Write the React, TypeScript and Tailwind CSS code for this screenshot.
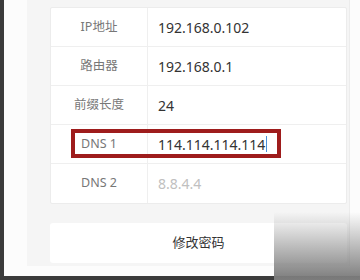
const ROWS = [
  { label: "IP地址", value: "192.168.0.102" },
  { label: "路由器", value: "192.168.0.1" },
  { label: "前缀长度", value: "24" },
  { label: "DNS 1", value: "114.114.114.114", focused: true },
  { label: "DNS 2", value: "8.8.4.4", placeholder: true },
];

export default function App() {
  return (
    <div
      className="relative w-[360px] h-[280px] overflow-hidden bg-[#3b3b3b] pl-[4px] pb-[4px]"
      style={{ fontFamily: '"Noto Sans", "Noto Sans CJK SC", sans-serif' }}
    >
      <div className="h-full w-full bg-[#fcfcfc] pl-[23px]">
        <div className="w-[323px] h-[266px] bg-[#f5f5f5] pl-[23px] pt-[7px] border-r border-[#ececec]">
          {/* settings table */}
          <div className="relative w-[297px] bg-white border border-[#ececec] rounded-[2px]">
            {ROWS.map((r, i) => (
              <div
                key={r.label}
                className={`grid grid-cols-[97px_1fr] h-[39px] ${i < ROWS.length - 1 ? "border-b border-[#efefef]" : ""}`}
              >
                <div className="flex items-center justify-center border-r border-[#efefef] text-[12.5px] text-[#777]">
                  {r.label}
                </div>
                <div
                  className={`flex items-center pl-[10px] text-[14px] ${r.placeholder ? "text-[#c0c0c0]" : "text-[#333]"}`}
                >
                  {r.value}
                  {r.focused && <span className="ml-[1px] w-[1px] h-[16px] bg-[#4a90d9]" />}
                </div>
              </div>
            ))}
            {/* red highlight annotation */}
            <div className="absolute left-[20px] top-[121px] w-[210px] h-[29px] border-[4px] border-[#9e1c1c]" />
          </div>

          {/* button */}
          <div className="mt-[19px] w-[297px] h-[40px] bg-white rounded-[3px] flex items-center justify-center text-[13px] text-[#333]">
            修改密码
          </div>
        </div>
      </div>

      {/* photo shading at bottom right */}
      <div className="absolute left-[274px] top-[212px] right-0 bottom-0 bg-gradient-to-b from-[rgba(120,120,120,0)] to-[#7c7c7c]" />
    </div>
  );
}
